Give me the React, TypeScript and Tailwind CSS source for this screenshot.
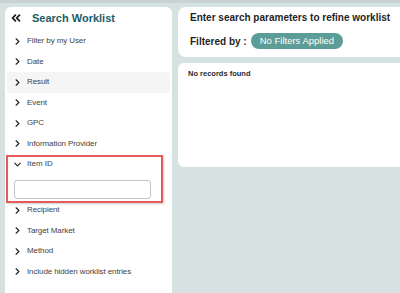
import { ChevronRight, ChevronDown, ChevronsLeft } from 'lucide-react';

const before = ['Filter by my User', 'Date', 'Result', 'Event', 'GPC', 'Information Provider'];
const after = ['Recipient', 'Target Market', 'Method', 'Include hidden worklist entries'];

function Row({ label, active }: { label: string; active?: boolean }) {
  return (
    <div
      className={`h-[20.5px] flex items-center pl-[5px] gap-[4px] rounded-[3px] ${
        active ? 'bg-[#f5f5f5]' : ''
      }`}
    >
      <ChevronRight size={11} strokeWidth={2.5} className="text-[#222]" />
      <span className="text-[8px] text-[#3f3f3f] tracking-[-0.1px]">{label}</span>
    </div>
  );
}

export default function App() {
  return (
    <div
      className="w-[400px] h-[293px] overflow-hidden bg-[#d6e2e2] border-t-[3px] border-[#c9d1d1] flex gap-[6px] pl-[5px] pt-[4px]"
      style={{ fontFamily: '"Liberation Sans", Arial, sans-serif' }}
    >
      {/* Filter panel */}
      <div className="w-[167px] h-[300px] shrink-0 bg-white rounded-[6px] px-[2px]">
        <div className="h-[22px] flex items-center pl-[2px] gap-[9px]">
          <ChevronsLeft size={14} strokeWidth={3} className="text-[#1a1a1a]" />
          <span className="text-[11px] font-bold text-[#1d5c66]">Search Worklist</span>
        </div>

        <div className="mt-[2px]">
          {before.map((l) => (
            <Row key={l} label={l} active={l === 'Result'} />
          ))}

          {/* Item ID open */}
          <div className="relative h-[46px]">
            <div className="h-[20.5px] flex items-center pl-[5px] gap-[4px]">
              <ChevronDown size={11} strokeWidth={2.5} className="text-[#222]" />
              <span className="text-[8px] text-[#3f3f3f]">Item ID</span>
            </div>
            <div className="pl-[7px] pt-[3px]">
              <input className="w-[137px] h-[19px] border border-[#c4c4c4] rounded-[3px] bg-white" />
            </div>
            <div className="absolute left-[-1px] top-[1px] w-[157px] h-[48px] border-2 border-[#e35b5b] shadow-[1px_1px_2px_rgba(0,0,0,0.2)] pointer-events-none" />
          </div>

          {after.map((l) => (
            <Row key={l} label={l} />
          ))}
        </div>
      </div>

      {/* Results */}
      <div className="w-[240px] shrink-0 flex flex-col gap-[6px]">
        <div className="h-[50px] bg-white rounded-[8px] pl-[12px]">
          <div className="h-[20px] flex items-center text-[10px] font-bold text-[#1f1f1f]">
            Enter search parameters to refine worklist
          </div>
          <div className="flex items-center gap-[4px] mt-[6px]">
            <span className="text-[10px] font-bold text-[#1f1f1f]">Filtered by :</span>
            <span className="h-[16px] px-[9px] rounded-full bg-[#5c9d97] text-white text-[9.5px] flex items-center">
              No Filters Applied
            </span>
          </div>
        </div>
        <div className="h-[104px] bg-white rounded-[6px] pl-[10px] pt-[6px]">
          <div className="text-[7.5px] leading-[10px] font-bold text-[#2a2a2a]">No records found</div>
        </div>
      </div>
    </div>
  );
}
